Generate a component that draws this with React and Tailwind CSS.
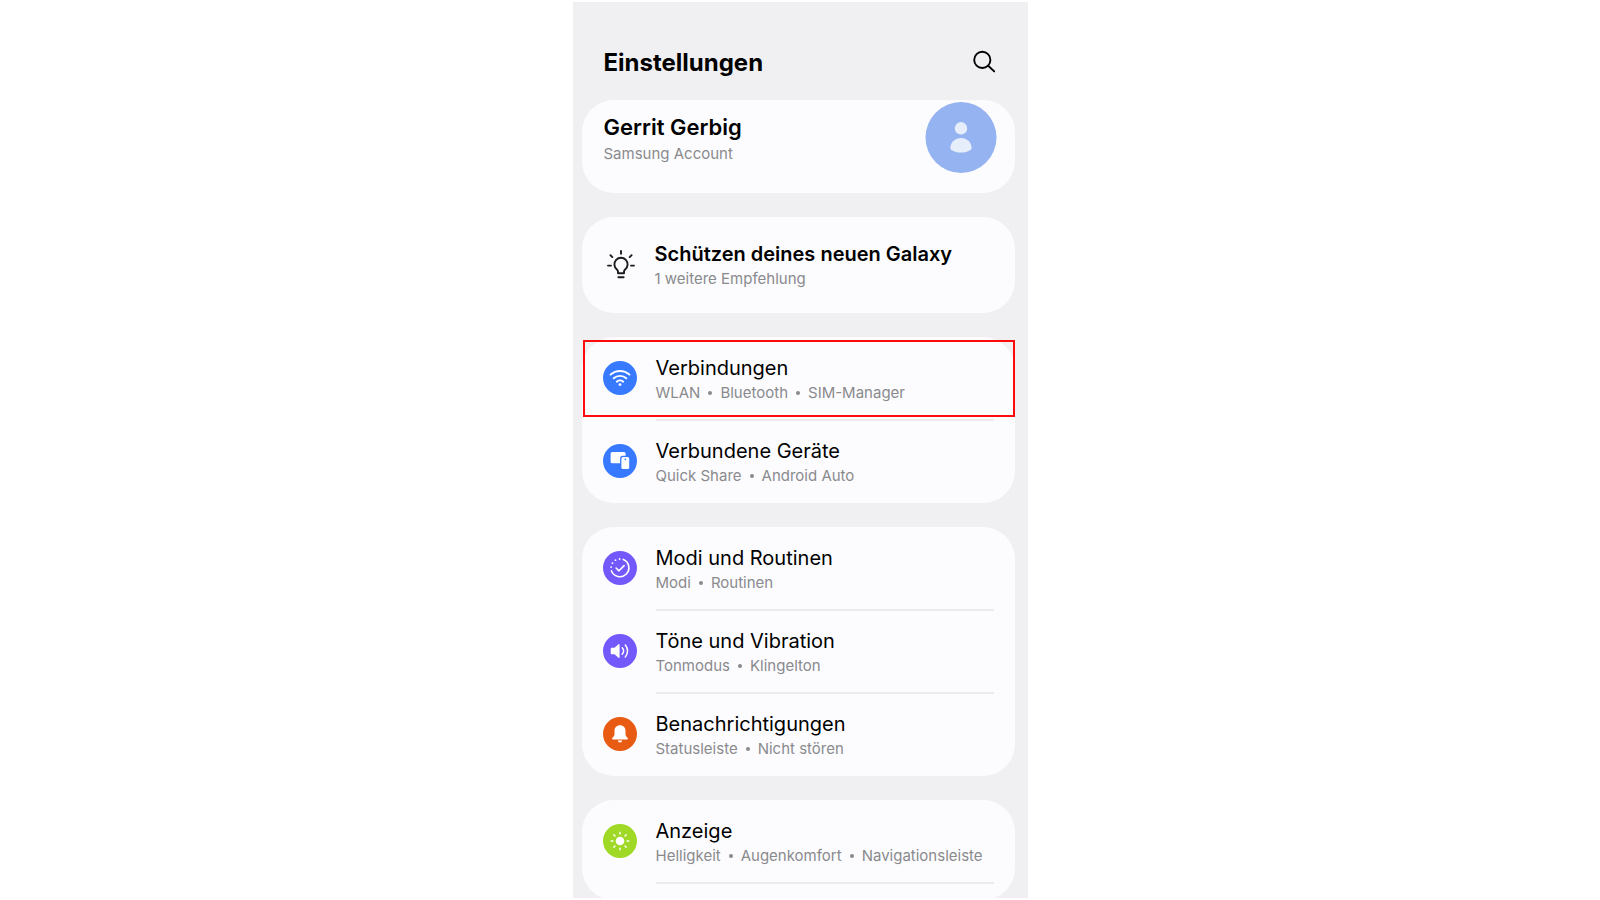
import React from 'react';

const stroke = { fill: 'none', stroke: 'currentColor', strokeLinecap: 'round', strokeLinejoin: 'round' };

function WifiIcon() {
  return (
    <svg viewBox="0 0 34 34" className="size-[34px]" aria-hidden="true">
      <g {...stroke} strokeWidth="1.9">
        <path d="M7.5 13.6a14.4 14.4 0 0 1 19 0" />
        <path d="M10.7 17.3a9.4 9.4 0 0 1 12.6 0" />
        <path d="M13.8 20.7a4.8 4.8 0 0 1 6.4 0" />
      </g>
      <circle cx="17" cy="23.6" r="1.4" fill="currentColor" />
    </svg>
  );
}

function DevicesIcon() {
  return (
    <svg viewBox="0 0 34 34" className="size-[34px]" aria-hidden="true">
      <rect x="7.6" y="8.1" width="15" height="11.2" rx="1.6" fill="currentColor" />
      <rect x="17.1" y="11.8" width="10.4" height="14.6" rx="2.6" fill="#387aff" />
      <rect x="18.4" y="13.1" width="7.8" height="12" rx="1.6" fill="currentColor" />
      <circle cx="22.3" cy="15.4" r="0.8" fill="#387aff" />
    </svg>
  );
}

function RoutineIcon() {
  return (
    <svg viewBox="0 0 34 34" className="size-[34px]" aria-hidden="true">
      <g {...stroke} strokeWidth="1.6">
        <path d="M20.3 8.4A9 9 0 1 1 8.4 19.8" />
        <path d="M13.1 17l2.9 2.8 5.1-5.2" />
      </g>
      <g fill="currentColor">
        <circle cx="16.6" cy="8" r="0.9" />
        <circle cx="12.5" cy="9.2" r="0.9" />
        <circle cx="9.5" cy="12.2" r="0.9" />
        <circle cx="8.1" cy="16.1" r="0.9" />
      </g>
    </svg>
  );
}

function SoundIcon() {
  return (
    <svg viewBox="0 0 34 34" className="size-[34px]" aria-hidden="true">
      <path d="M8.6 13.8h2.9l4-3.5c.5-.4 1.1-.1 1.1.5v12.4c0 .6-.6.9-1.1.5l-4-3.5H8.6a.9.9 0 0 1-.9-.9v-4.6c0-.5.4-.9.9-.9z" fill="currentColor" />
      <g {...stroke} strokeWidth="1.5">
        <path d="M19.2 13.8a4.8 4.8 0 0 1 0 6.4" />
        <path d="M22.3 11a9.2 9.2 0 0 1 0 12" />
      </g>
    </svg>
  );
}

function BellIcon() {
  return (
    <svg viewBox="0 0 34 34" className="size-[34px]" aria-hidden="true">
      <path d="M17 8.2c-3.3 0-5.5 2.4-5.5 5.5v3.3c0 1.3-.6 2.2-1.5 3.3-.6.7-.9 1-.9 1.4 0 .5.4.8.9.8h14c.5 0 .9-.3.9-.8 0-.4-.3-.7-.9-1.4-.9-1.1-1.5-2-1.5-3.3v-3.3c0-3.1-2.2-5.5-5.5-5.5z" fill="currentColor" />
      <path d="M14.8 23.5h4.4c-.2 1.2-1 1.9-2.2 1.9s-2-.7-2.2-1.9z" fill="currentColor" />
    </svg>
  );
}

function SunIcon() {
  return (
    <svg viewBox="0 0 34 34" className="size-[34px]" aria-hidden="true">
      <circle cx="17" cy="17" r="4.3" fill="currentColor" />
      <g {...stroke} strokeWidth="1.4">
        <path d="M17 8.2v1.7M17 24.1v1.7M8.2 17h1.7M24.1 17h1.7M10.8 10.8l1.2 1.2M22 22l1.2 1.2M10.8 23.2l1.2-1.2M22 12l1.2-1.2" />
      </g>
    </svg>
  );
}

function BulbIcon() {
  return (
    <svg viewBox="0 0 34 34" className="size-[34px] shrink-0 text-[#1c1c1e]" aria-hidden="true">
      <g {...stroke} strokeWidth="1.9">
        <path d="M14 25.2v-1.5c0-.8-.4-1.5-1.1-2.2a6.6 6.6 0 1 1 8.2 0c-.7.7-1.1 1.4-1.1 2.2v1.5z" />
        <path d="M14.4 29.2h5.2" />
        <path d="M17 3v2.8M4 17.6h3M27 17.6h3M6.4 7.2l1.9 1.9M27.6 7.2l-1.9 1.9" />
      </g>
    </svg>
  );
}

function Details({ items }) {
  return (
    <span className="flex items-center text-[15px] leading-[22px] text-[#8a8a8d]">
      {items.map((item, i) => (
        <React.Fragment key={item}>
          {i > 0 && <span className="mx-2 size-1 shrink-0 rounded-full bg-[#8a8a8d]" aria-hidden="true" />}
          <span className="whitespace-nowrap">{item}</span>
        </React.Fragment>
      ))}
    </span>
  );
}

function Row({ icon, color, title, items, last, marked }) {
  return (
    <li className="relative">
      <a href="#" className={`flex items-stretch gap-[19px] pl-[21px] pr-[21px] ${last ? 'h-[82px]' : 'h-[83px]'}`}>
        <span className={`mt-[23px] size-[34px] shrink-0 rounded-full text-white ${color}`}>{icon}</span>
        <span className={`flex min-w-0 flex-1 flex-col pt-4 ${last ? '' : 'border-b-2 border-[#ebebee]'}`}>
          <span className="text-xl leading-7 text-black">{title}</span>
          <Details items={items} />
        </span>
      </a>
      {marked && <span className="pointer-events-none absolute bottom-1 left-px right-0 top-0.5 border-2 border-[#ff0a0a]" />}
    </li>
  );
}

function Card({ children }) {
  return <ul className="rounded-[32px] bg-[#fcfcff] pt-px">{children}</ul>;
}

export default function App() {
  return (
    <div className="flex h-screen justify-center bg-white py-0.5 font-['Inter',sans-serif]">
      <main className="w-full max-w-[455px] overflow-hidden bg-[#f0f0f2] pl-[9px] pr-[13px]">
        <header className="flex h-[98px] items-center justify-between pl-[22px] pr-[18px] pt-6">
          <h1 className="text-2xl font-bold text-black">Einstellungen</h1>
          <button type="button" aria-label="Suchen" className="text-black">
            <svg viewBox="0 0 26 26" className="size-[26px]" aria-hidden="true">
              <g {...stroke} strokeWidth="1.9">
                <circle cx="11.3" cy="9.9" r="8.1" />
                <path d="M17.2 15.8l6 5.6" />
              </g>
            </svg>
          </button>
        </header>

        <div className="flex flex-col gap-6">
          <a href="#" className="flex h-[93px] items-start justify-between rounded-[32px] bg-[#fcfcff] pl-[22px] pr-[18px] pt-px">
            <span className="flex flex-col gap-0.5 pt-3">
              <span className="text-[22px] font-semibold leading-7 text-black">Gerrit Gerbig</span>
              <span className="text-[15px] leading-[22px] text-[#8a8a8d]">Samsung Account</span>
            </span>
            <svg viewBox="0 0 72 72" className="size-[72px]" aria-hidden="true">
              <circle cx="36" cy="36.5" r="35.5" fill="#94b3f0" />
              <circle cx="36" cy="27.3" r="6.2" fill="#e6edfb" />
              <path d="M25.4 47.1c0-6 4.6-10.2 10.6-10.2s10.6 4.200 10.6 10.200c0 .8-.2 1.400-.9 1.800-2.700 1.700-6 2.600-9.700 2.600s-7-.9-9.700-2.600c-.7-.4-.9-1-.9-1.800z" fill="#e6edfb" />
            </svg>
          </a>

          <a href="#" className="flex h-24 items-center gap-[17px] rounded-[32px] bg-[#fcfcff] pl-[22px] pr-[21px]">
            <BulbIcon />
            <span className="flex flex-col">
              <span className="text-xl font-semibold leading-7 text-black">Schützen deines neuen Galaxy</span>
              <span className="text-[15px] leading-[22px] text-[#8a8a8d]">1 weitere Empfehlung</span>
            </span>
          </a>

          <Card>
            <Row marked icon={<WifiIcon />} color="bg-[#387aff]" title="Verbindungen" items={['WLAN', 'Bluetooth', 'SIM-Manager']} />
            <Row last icon={<DevicesIcon />} color="bg-[#387aff]" title="Verbundene Geräte" items={['Quick Share', 'Android Auto']} />
          </Card>

          <Card>
            <Row icon={<RoutineIcon />} color="bg-[#7359fb]" title="Modi und Routinen" items={['Modi', 'Routinen']} />
            <Row icon={<SoundIcon />} color="bg-[#7359fb]" title="Töne und Vibration" items={['Tonmodus', 'Klingelton']} />
            <Row last icon={<BellIcon />} color="bg-[#e75b12]" title="Benachrichtigungen" items={['Statusleiste', 'Nicht stören']} />
          </Card>

          <Card>
            <Row icon={<SunIcon />} color="bg-[#a0d826]" title="Anzeige" items={['Helligkeit', 'Augenkomfort', 'Navigationsleiste']} />
            <li className="h-4" />
          </Card>
        </div>
      </main>
    </div>
  );
}
